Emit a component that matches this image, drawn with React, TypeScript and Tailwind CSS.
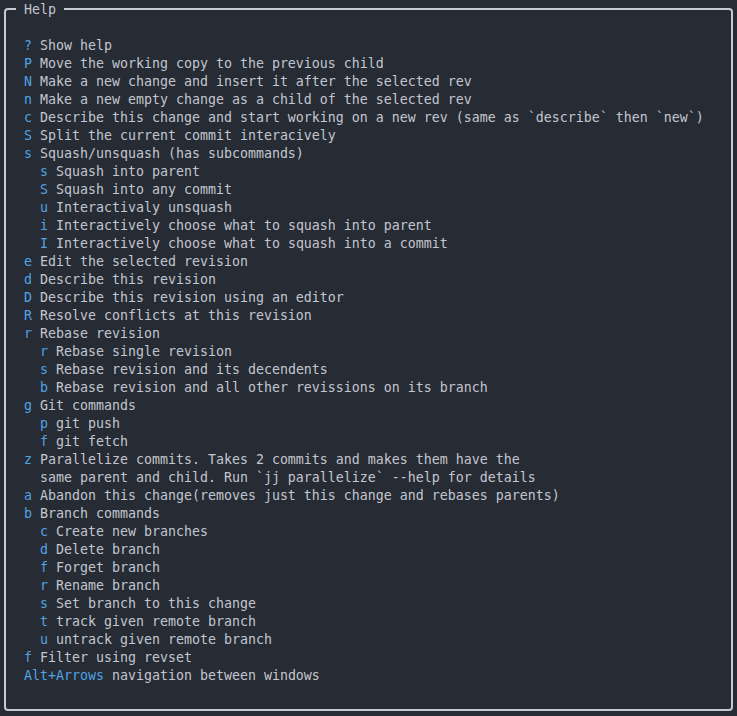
import React from "react";

type Line = { indent?: boolean; k: string; t: string };

const lines: Line[] = [
  { k: "?", t: "Show help" },
  { k: "P", t: "Move the working copy to the previous child" },
  { k: "N", t: "Make a new change and insert it after the selected rev" },
  { k: "n", t: "Make a new empty change as a child of the selected rev" },
  { k: "c", t: "Describe this change and start working on a new rev (same as `describe` then `new`)" },
  { k: "S", t: "Split the current commit interacively" },
  { k: "s", t: "Squash/unsquash (has subcommands)" },
  { indent: true, k: "s", t: "Squash into parent" },
  { indent: true, k: "S", t: "Squash into any commit" },
  { indent: true, k: "u", t: "Interactivaly unsquash" },
  { indent: true, k: "i", t: "Interactively choose what to squash into parent" },
  { indent: true, k: "I", t: "Interactively choose what to squash into a commit" },
  { k: "e", t: "Edit the selected revision" },
  { k: "d", t: "Describe this revision" },
  { k: "D", t: "Describe this revision using an editor" },
  { k: "R", t: "Resolve conflicts at this revision" },
  { k: "r", t: "Rebase revision" },
  { indent: true, k: "r", t: "Rebase single revision" },
  { indent: true, k: "s", t: "Rebase revision and its decendents" },
  { indent: true, k: "b", t: "Rebase revision and all other revissions on its branch" },
  { k: "g", t: "Git commands" },
  { indent: true, k: "p", t: "git push" },
  { indent: true, k: "f", t: "git fetch" },
  { k: "z", t: "Parallelize commits. Takes 2 commits and makes them have the" },
  { k: " ", t: "same parent and child. Run `jj parallelize` --help for details" },
  { k: "a", t: "Abandon this change(removes just this change and rebases parents)" },
  { k: "b", t: "Branch commands" },
  { indent: true, k: "c", t: "Create new branches" },
  { indent: true, k: "d", t: "Delete branch" },
  { indent: true, k: "f", t: "Forget branch" },
  { indent: true, k: "r", t: "Rename branch" },
  { indent: true, k: "s", t: "Set branch to this change" },
  { indent: true, k: "t", t: "track given remote branch" },
  { indent: true, k: "u", t: "untrack given remote branch" },
  { k: "f", t: "Filter using revset" },
  { k: "Alt+Arrows", t: "navigation between windows" },
];

export default function App() {
  return (
    <div
      className="w-[737px] h-[716px] bg-[#272b33] overflow-hidden pt-[8px] pl-[4px]"
      style={{ fontFamily: '"DejaVu Sans Mono", "Liberation Mono", monospace' }}
    >
      <div className="relative w-[729px] h-[703px] border-2 border-[#c6cad4] rounded-[4px] pt-[27px] pl-[18px] text-[13.29px] leading-[18px] text-[#c3c6ce]">
        <div className="absolute left-[10px] top-[-9px] h-[18px] px-[8px] bg-[#272b33] text-[#c3c6ce] whitespace-pre">
          Help
        </div>
        {lines.map((l, i) => (
          <div key={i} className="h-[18px] whitespace-pre">
            {l.indent ? "  " : ""}
            <span className="text-[#4ea3e8]">{l.k}</span>
            {" " + l.t}
          </div>
        ))}
      </div>
    </div>
  );
}
